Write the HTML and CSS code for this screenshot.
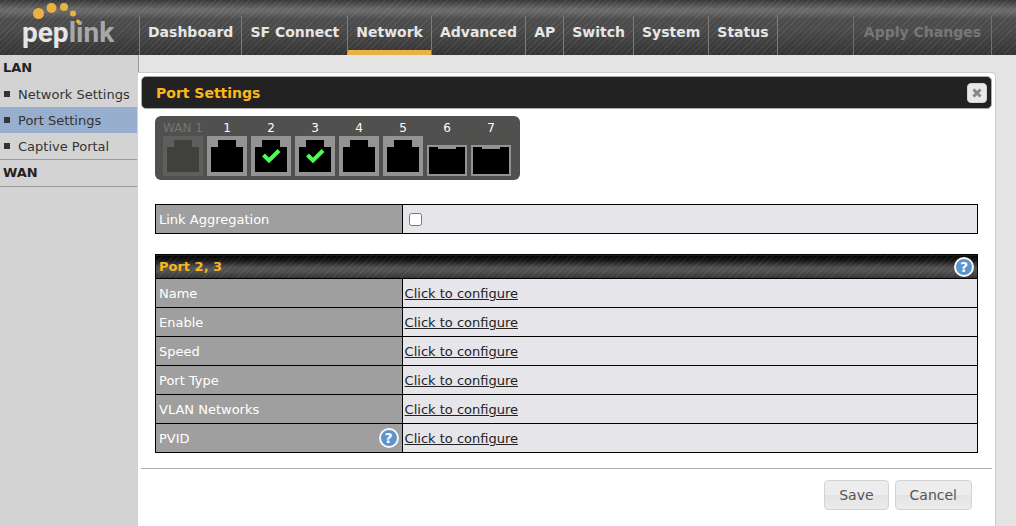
FILE: index.html
```html
<!DOCTYPE html>
<html lang="en">
<head>
    <meta charset="UTF-8">
    <meta name="viewport" content="width=device-width, initial-scale=1.0">
    <title>Port Settings</title>
    <link rel="stylesheet" href="styles.css">
</head>
<body>
    <header class="header">
        <a class="logo" href="#">
            <svg class="logo-dots" width="64" height="24" viewBox="0 0 64 24" aria-hidden="true">
                <circle cx="16.500" cy="13.500" r="5.500"/>
                <circle cx="29.500" cy="8" r="5"/>
                <circle cx="42" cy="7" r="4"/>
                <circle cx="51" cy="13.500" r="3"/>
                <circle cx="56" cy="21.500" r="2"/>
            </svg>
            <span class="logo-text">pep<span class="logo-link">link</span></span>
        </a>
        <nav class="nav">
            <a href="#">Dashboard</a>
            <a href="#">SF Connect</a>
            <a href="#" class="active">Network</a>
            <a href="#">Advanced</a>
            <a href="#">AP</a>
            <a href="#">Switch</a>
            <a href="#">System</a>
            <a href="#">Status</a>
        </nav>
        <button class="apply" type="button" disabled>Apply Changes</button>
    </header>

    <div class="page">
        <aside class="sidebar">
            <h2>LAN</h2>
            <ul>
                <li><a href="#">Network Settings</a></li>
                <li class="active"><a href="#">Port Settings</a></li>
                <li><a href="#">Captive Portal</a></li>
            </ul>
            <h2 class="closed">WAN</h2>
        </aside>

        <main class="content">
            <form class="panel">
                <div class="title-bar">
                    <h1>Port Settings</h1>
                    <button class="close" type="button" aria-label="Close">
                        <svg width="10" height="10" viewBox="0 0 10 10"><path d="M1.500 1.500l7 7M8.500 1.500l-7 7"/></svg>
                    </button>
                </div>

                <div class="panel-body">
                    <div class="ports">
                        <div class="port off">
                            <span>WAN 1</span>
                            <svg width="40" height="40" viewBox="0 0 40 40"><path class="frame" d="M0 0h40v40H0z"/><path class="hole" d="M4 36V11h7V4h18v7h7v25z"/></svg>
                        </div>
                        <div class="port">
                            <span>1</span>
                            <svg width="40" height="40" viewBox="0 0 40 40"><path class="frame" d="M0 0h40v40H0z"/><path class="hole" d="M4 36V11h7V4h18v7h7v25z"/></svg>
                        </div>
                        <div class="port">
                            <span>2</span>
                            <svg width="40" height="40" viewBox="0 0 40 40"><path class="frame" d="M0 0h40v40H0z"/><path class="hole" d="M4 36V11h7V4h18v7h7v25z"/><path class="tick" d="M12.500 19l5.500 5.500L28 14.500"/></svg>
                        </div>
                        <div class="port">
                            <span>3</span>
                            <svg width="40" height="40" viewBox="0 0 40 40"><path class="frame" d="M0 0h40v40H0z"/><path class="hole" d="M4 36V11h7V4h18v7h7v25z"/><path class="tick" d="M12.500 19l5.500 5.500L28 14.500"/></svg>
                        </div>
                        <div class="port">
                            <span>4</span>
                            <svg width="40" height="40" viewBox="0 0 40 40"><path class="frame" d="M0 0h40v40H0z"/><path class="hole" d="M4 36V11h7V4h18v7h7v25z"/></svg>
                        </div>
                        <div class="port">
                            <span>5</span>
                            <svg width="40" height="40" viewBox="0 0 40 40"><path class="frame" d="M0 0h40v40H0z"/><path class="hole" d="M4 36V11h7V4h18v7h7v25z"/></svg>
                        </div>
                        <div class="port">
                            <span>6</span>
                            <svg width="40" height="40" viewBox="0 0 40 40"><path class="frame" d="M0 9h40v31H0z"/><path class="hole" d="M2 11h9v2h18v-2h9v27H2z"/></svg>
                        </div>
                        <div class="port">
                            <span>7</span>
                            <svg width="40" height="40" viewBox="0 0 40 40"><path class="frame" d="M0 9h40v31H0z"/><path class="hole" d="M2 11h9v2h18v-2h9v27H2z"/></svg>
                        </div>
                    </div>

                    <table class="settings">
                        <tr>
                            <th scope="row"><label for="link-aggregation">Link Aggregation</label></th>
                            <td><input type="checkbox" id="link-aggregation"></td>
                        </tr>
                    </table>

                    <table class="settings">
                        <thead>
                            <tr>
                                <th colspan="2">
                                    <div class="cell">
                                        Port 2, 3
                                        <button class="help" type="button" aria-label="Help">?</button>
                                    </div>
                                </th>
                            </tr>
                        </thead>
                        <tbody>
                            <tr>
                                <th scope="row">Name</th>
                                <td><a href="#">Click to configure</a></td>
                            </tr>
                            <tr>
                                <th scope="row">Enable</th>
                                <td><a href="#">Click to configure</a></td>
                            </tr>
                            <tr>
                                <th scope="row">Speed</th>
                                <td><a href="#">Click to configure</a></td>
                            </tr>
                            <tr>
                                <th scope="row">Port Type</th>
                                <td><a href="#">Click to configure</a></td>
                            </tr>
                            <tr>
                                <th scope="row">VLAN Networks</th>
                                <td><a href="#">Click to configure</a></td>
                            </tr>
                            <tr>
                                <th scope="row">
                                    <div class="cell">
                                        PVID
                                        <button class="help" type="button" aria-label="Help">?</button>
                                    </div>
                                </th>
                                <td><a href="#">Click to configure</a></td>
                            </tr>
                        </tbody>
                    </table>
                </div>

                <div class="actions">
                    <button type="button">Save</button>
                    <button type="button">Cancel</button>
                </div>
            </form>
        </main>
    </div>
</body>
</html>
```

FILE: styles.css
```css
* {
    box-sizing: border-box;
}
body {
    margin: 0;
    min-height: 100vh;
    display: flex;
    flex-direction: column;
    background: #e4e4e4;
    color: #222;
    font-family: Verdana, "DejaVu Sans", sans-serif;
    font-size: 13px;
}
button {
    font-family: inherit;
    cursor: pointer;
}

/* top bar */
.header {
    display: flex;
    align-items: flex-end;
    height: 55px;
    padding-right: 24px;
    background:
        repeating-linear-gradient(135deg, rgba(255, 255, 255, 0.07) 0 1px, transparent 1px 4px),
        linear-gradient(#383838 0, #686868 9px, #686868 12px, #4c4c4c 19px, #4a4a4a 30px, #343434 55px);
}
.logo {
    position: relative;
    width: 139px;
    height: 55px;
    padding: 16px 0 0 22px;
    text-decoration: none;
}
.logo-dots {
    position: absolute;
    top: 0;
    left: 22px;
    fill: #e8b344;
}
.logo-text {
    display: block;
    color: #e6e6e6;
    font-family: Roboto, "Open Sans", sans-serif;
    font-size: 28px;
    font-weight: bold;
    line-height: 34px;
}
.logo-link {
    color: #a8a8a8;
}
.nav {
    display: flex;
    flex: 1;
    height: 39px;
}
.nav a,
.apply {
    height: 39px;
    padding: 0 8px;
    border-left: 1px solid #7c7c7c;
    color: #e6e6e6;
    font-size: 14px;
    font-weight: bold;
    line-height: 32px;
    text-decoration: none;
    white-space: nowrap;
}
.nav a:last-child {
    border-right: 1px solid #7c7c7c;
}
.nav a.active {
    border-bottom: 5px solid #e8b344;
}
.apply {
    padding: 0 10px 7px;
    border: solid #707070;
    border-width: 0 1px;
    background: none;
    color: #777;
}

.page {
    display: flex;
    flex: 1;
}

/* side menu */
.sidebar {
    width: 138px;
    padding-right: 1px;
    background: #d3d3d3;
    flex-shrink: 0;
}
.sidebar h2 {
    margin: 0;
    padding-left: 3px;
    font-size: 13px;
    line-height: 26px;
}
.sidebar .closed {
    border-bottom: 1px solid #999;
}
.sidebar ul {
    margin: 0;
    padding: 0;
    border-bottom: 1px solid #999;
    list-style: none;
}
.sidebar li {
    display: flex;
    align-items: center;
    gap: 8px;
    height: 26px;
    padding-left: 4px;
}
.sidebar li::before {
    content: "";
    width: 6px;
    height: 6px;
    background: #333;
}
.sidebar li.active {
    background: #98aece;
}
.sidebar li a {
    color: #333;
    text-decoration: none;
    white-space: nowrap;
}

/* main panel */
.content {
    display: flex;
    flex: 1;
    padding: 17px 20px 0 0;
    background: linear-gradient(#999, #999) no-repeat 0 0 / 1px 17px;
}
.panel {
    flex: 1;
    padding: 3px 3px 0;
    border: solid #ccc;
    border-width: 1px 1px 0 0;
    border-radius: 0 5px 0 0;
    background: #fff;
}
.title-bar {
    display: flex;
    align-items: center;
    justify-content: space-between;
    height: 33px;
    padding: 0 4px 0 14px;
    border: 1px solid #aaa;
    border-radius: 5px;
    background: #222;
}
.title-bar h1 {
    margin: 0;
    color: #fdb51c;
    font-size: 14px;
}
.close {
    display: flex;
    align-items: center;
    justify-content: center;
    width: 20px;
    height: 20px;
    padding: 0;
    border: 1px solid #d3d3d3;
    border-radius: 4px;
    background: #e9e9e9;
}
.close path {
    fill: none;
    stroke: #888;
    stroke-width: 3;
}
.panel-body {
    padding: 7px 14px 15px;
}

/* port selector */
.ports {
    display: inline-flex;
    gap: 4px;
    height: 64px;
    padding: 4px 9px 4px 8px;
    border-radius: 6px;
    background: #50504e;
}
.port {
    display: flex;
    flex-direction: column;
    align-items: center;
    width: 40px;
    color: #fff;
    font-size: 12px;
    line-height: 16px;
    white-space: nowrap;
}
.port svg {
    flex-shrink: 0;
}
.frame {
    fill: #939393;
}
.hole {
    fill: #000;
}
.tick {
    fill: none;
    stroke: #4dff55;
    stroke-width: 4;
}
.off {
    color: #747472;
}
.off .frame {
    fill: #5e5e5c;
}
.off .hole {
    fill: #40403e;
}

/* settings tables */
.settings {
    width: 100%;
    margin-top: 20px;
    border-collapse: collapse;
    table-layout: auto;
}
.ports + .settings {
    margin-top: 24px;
}
.settings th,
.settings td {
    height: 29px;
    padding: 0 3px 0 2px;
    border: 1px solid #000;
    text-align: left;
}
.settings th {
    width: 30%;
    padding-left: 3px;
    background: #9f9f9f;
    color: #fff;
    font-weight: normal;
}
.settings td {
    background: #e6e5ea;
}
.settings thead th {
    height: 24px;
    background:
        repeating-linear-gradient(135deg, rgba(255, 255, 255, 0.08) 0 1px, transparent 1px 4px),
        linear-gradient(#000, #151515 5px, #505050 12px, #505050 16px, #303030);
    color: #fdb51c;
    font-weight: bold;
}
.settings a {
    color: #222;
}
.settings input {
    display: block;
    width: 13px;
    height: 13px;
    margin: 0 4px;
}
.cell {
    display: flex;
    align-items: center;
    justify-content: space-between;
}
.help {
    width: 20px;
    height: 20px;
    padding: 0;
    border: 2px solid #f4f7fb;
    border-radius: 50%;
    background: #5f94c9;
    color: #fff;
    font-size: 14px;
    font-weight: bold;
    line-height: 16px;
}

.actions {
    display: flex;
    justify-content: flex-end;
    gap: 6px;
    padding: 11px 20px 16px;
    border-top: 1px solid #aaa;
}
.actions button {
    height: 30px;
    padding: 0 14px;
    border: 1px solid #d3d3d3;
    border-radius: 4px;
    background: linear-gradient(#ededed 50%, #e4e4e4 50%, #ebebeb);
    color: #555;
    font-size: 14px;
}
```
